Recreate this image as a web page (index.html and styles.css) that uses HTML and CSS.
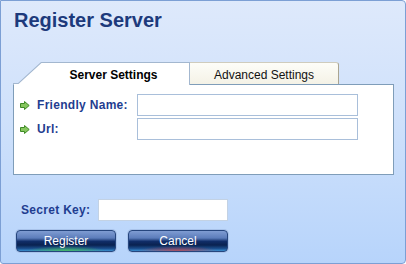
FILE: index.html
```html
<!DOCTYPE html>
<html lang="en">
<head>
    <meta charset="UTF-8">
    <title>Register Server</title>
    <link rel="stylesheet" href="styles.css">
</head>
<body>
    <div class="window">
        <div class="title">Register Server</div>

        <div class="tabs">
            <div class="tab-active">
                <div class="tab-active-fill">Server Settings</div>
            </div>
            <div class="tab">Advanced Settings</div>
        </div>

        <div class="panel">
            <div class="field-row">
                <svg class="arrow" viewBox="0 0 10 9" width="10" height="9" aria-hidden="true">
                    <polygon points="0.5,2.5 4.5,2.5 4.5,0.5 9.2,4.5 4.5,8.5 4.5,6.5 0.5,6.5" fill="#86c65e" stroke="#3f8a25" stroke-width="1"></polygon>
                </svg>
                <label class="field-label">Friendly Name:</label>
                <input class="text-input" type="text">
            </div>
            <div class="field-row">
                <svg class="arrow" viewBox="0 0 10 9" width="10" height="9" aria-hidden="true">
                    <polygon points="0.5,2.5 4.5,2.5 4.5,0.5 9.2,4.5 4.5,8.5 4.5,6.5 0.5,6.5" fill="#86c65e" stroke="#3f8a25" stroke-width="1"></polygon>
                </svg>
                <label class="field-label">Url:</label>
                <input class="text-input" type="text">
            </div>
        </div>

        <div class="secret-row">
            <label class="secret-label">Secret Key:</label>
            <input class="secret-input" type="password">
        </div>

        <div class="buttons">
            <button class="btn btn-register">Register</button>
            <button class="btn btn-cancel">Cancel</button>
        </div>
    </div>
</body>
</html>
```

FILE: styles.css
```css
body {
    margin: 0;
    padding: 0;
    font-family: "Liberation Sans", Arial, sans-serif;
}
.window {
    width: 406px;
    height: 264px;
    box-sizing: border-box;
    border: 1px solid #7c9fd4;
    border-radius: 0 4px 4px 3px;
    background: linear-gradient(to bottom, #dee9fb 0%, #cfe1fb 45%, #b7d4fb 100%);
    padding-top: 8px;
}
.title {
    padding-left: 13px;
    font-size: 20px;
    font-weight: bold;
    color: #1d3a7c;
    line-height: 22px;
    height: 22px;
    margin-bottom: 31px;
}
.tabs {
    display: flex;
    height: 23px;
    margin: 0 11px -1px 12px;
    position: relative;
    z-index: 1;
}
.tab-active {
    width: 177px;
    height: 23px;
    background: #a3b7cf;
    clip-path: polygon(0 100%, 0 21px, 5px 21px, 28px 0, 100% 0, 100% 100%);
}
.tab-active-fill {
    height: 100%;
    box-sizing: border-box;
    background: #ffffff;
    clip-path: polygon(1px 100%, 1px 22px, 5.5px 22px, 28.5px 1px, calc(100% - 1px) 1px, calc(100% - 1px) 100%);
    padding: 6px 0 0 24px;
    text-align: center;
    font-size: 12px;
    font-weight: bold;
    line-height: 14px;
    color: #000;
}
.tab {
    width: 149px;
    height: 22px;
    box-sizing: border-box;
    border-top: 1px solid #cfccbd;
    border-right: 1px solid #aaa591;
    border-radius: 0 3px 0 0;
    background: linear-gradient(to bottom, #fdfdf8 0%, #f4f2e6 100%);
    padding-top: 5px;
    text-align: center;
    font-size: 12px;
    line-height: 14px;
    color: #111;
}
.panel {
    margin: 0 11px 0 12px;
    height: 91px;
    box-sizing: border-box;
    border: 1px solid #7f9db9;
    background: #ffffff;
    padding: 9px 0 0 6px;
    display: flex;
    flex-direction: column;
    gap: 2px;
}
.field-row {
    display: flex;
    align-items: center;
    height: 22px;
}
.arrow {
    margin-right: 7px;
    flex-shrink: 0;
}
.field-label {
    width: 100px;
    font-size: 12px;
    font-weight: bold;
    letter-spacing: 0.3px;
    color: #1f3d90;
}
.text-input {
    width: 221px;
    height: 22px;
    box-sizing: border-box;
    border: 1px solid #a9bfda;
    margin: 0;
    padding: 0 3px;
    background: #fff;
    outline: none;
}
.secret-row {
    display: flex;
    align-items: center;
    margin-top: 24px;
    padding-left: 20px;
    height: 22px;
}
.secret-label {
    width: 77px;
    font-size: 12px;
    font-weight: bold;
    letter-spacing: 0.3px;
    color: #1f3d90;
}
.secret-input {
    width: 130px;
    height: 22px;
    box-sizing: border-box;
    border: 1px solid #c3d2e4;
    margin: 0;
    padding: 0 3px;
    background: #fff;
    outline: none;
}
.buttons {
    display: flex;
    gap: 12px;
    margin-top: 9px;
    padding-left: 15px;
}
.btn {
    width: 100px;
    height: 22px;
    box-sizing: border-box;
    border: 1px solid #26467e;
    border-radius: 4px;
    box-shadow: 0 0 0 1px #a9c3ea;
    color: #ffffff;
    font-family: "Liberation Sans", Arial, sans-serif;
    font-size: 12px;
    line-height: 18px;
    padding: 0;
    margin: 0;
}
.btn-register {
    background:
        radial-gradient(ellipse 40px 5px at 50% 100%, rgba(70, 190, 90, 0.9), rgba(70, 190, 90, 0) 100%),
        linear-gradient(to bottom, #7f9cd2 0%, #5c7dbb 35%, #102d68 52%, #0a2250 70%, #1b4f8e 88%, #3a8fd0 100%);
}
.btn-cancel {
    background:
        radial-gradient(ellipse 40px 5px at 50% 100%, rgba(190, 70, 80, 0.9), rgba(190, 70, 80, 0) 100%),
        linear-gradient(to bottom, #7f9cd2 0%, #5c7dbb 35%, #102d68 52%, #0a2250 70%, #1b4f8e 88%, #3a8fd0 100%);
}
```
